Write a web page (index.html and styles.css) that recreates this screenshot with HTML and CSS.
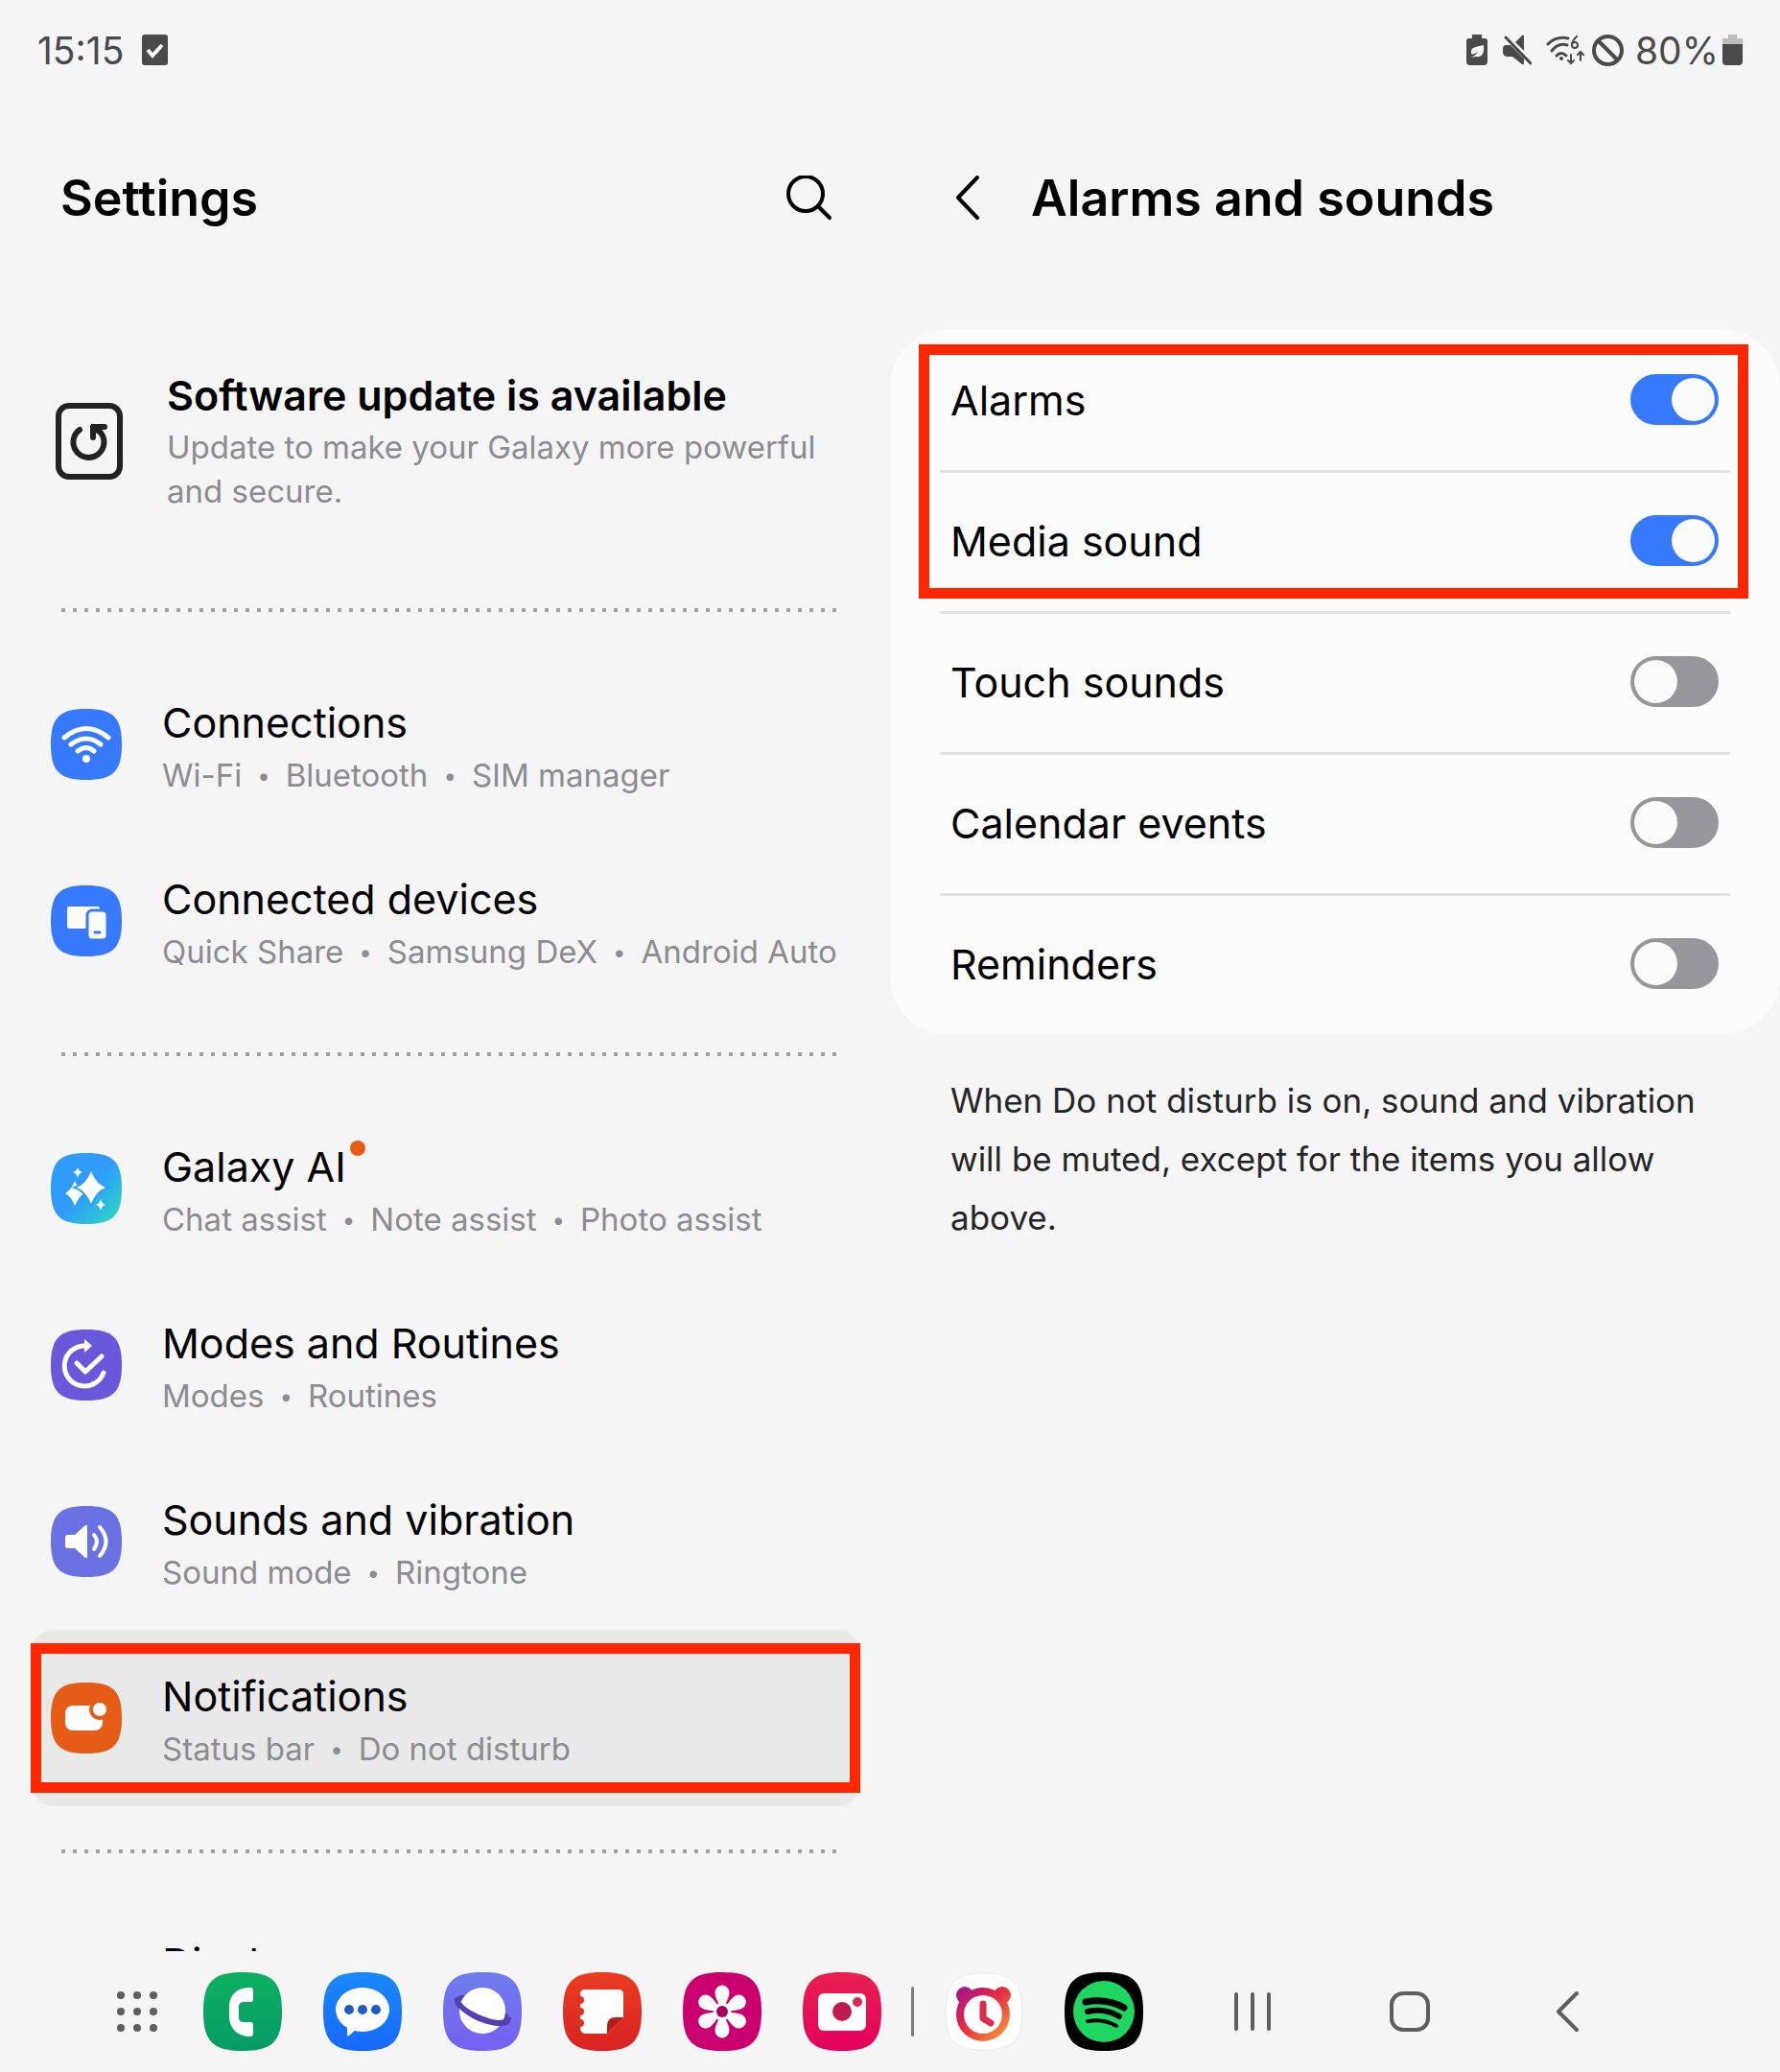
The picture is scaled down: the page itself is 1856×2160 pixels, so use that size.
FILE: index.html
```html
<!DOCTYPE html>
<html lang="en">
<head>
    <meta charset="UTF-8" />
    <meta name="viewport" content="width=device-width, initial-scale=1.0"/>
    <title>Settings</title>
    <link rel="stylesheet" href="styles.css">
</head>
<body>
<header class="status-bar">
    <span class="clock">15:15</span>
    <svg class="task-icon" width="27" height="32" viewBox="0 0 27 32"><rect width="27" height="32" rx="3" fill="#4a4a4a"/><path d="M6 16l5 6 10-11" fill="none" stroke="#fff" stroke-width="4"/></svg>
    <div class="status-icons">
        <svg width="22" height="32" viewBox="0 0 22 32"><path d="M6 0h10v4h3q3 0 3 3v21q0 4-4 4H4q-4 0-4-4V7q0-3 3-3h3z" fill="#4a4a4a"/><path d="M5 20c-1-7 4-7 13-9 1 9-2 13-8 12l-6 1c4-1 6-3 8-6-3 2-5 3-7 2z" fill="#f5f5f5"/></svg>
        <svg class="mute" width="30" height="32" viewBox="0 0 30 32"><path d="M13 8l7-7q2-1 2 1v15zM3 11h5l14 14v5q0 2-2 1l-10-8H5q-5 0-5-5v-3q0-4 3-4z" fill="#4a4a4a"/><path d="M3 3l26 27" stroke="#4a4a4a" stroke-width="3" stroke-linecap="round"/></svg>
        <svg class="wifi" width="40" height="32" viewBox="0 0 40 32"><g fill="none" stroke="#4a4a4a" stroke-width="3" stroke-linecap="round"><path d="M2 10Q11 1 23 4M6 17Q13 8 22 11M11 22q5-5 10 0"/><path d="M26 21v9m-3-3l3 3 3-3M36 27v-9m-3 3l3-3 3 3M32 2c-3 3-5 6-5 9" stroke-width="2"/><circle cx="30" cy="11" r="3" stroke-width="2"/></g><circle cx="16" cy="25" r="2" fill="#4a4a4a"/></svg>
        <svg width="33" height="33" viewBox="0 0 33 33"><g fill="none" stroke="#4a4a4a" stroke-width="4"><circle cx="16.500" cy="16.500" r="14.500"/><path d="M6 6l21 21"/></g></svg>
        <span class="battery-text">80%</span>
        <svg width="21" height="32" viewBox="0 0 21 32"><path d="M6 0h9v4h6v7H0V4h6z" fill="#bdbdbd"/><path d="M0 10h21v18q0 4-4 4H4q-4 0-4-4z" fill="#4a4a4a"/></svg>
    </div>
</header>

<main class="panes">
    <section class="pane settings-pane">
        <div class="pane-header">
            <h1>Settings</h1>
            <button class="icon-button" aria-label="Search">
                <svg width="48" height="48" viewBox="0 0 48 48"><g fill="none" stroke="#000" stroke-width="4" stroke-linecap="round"><circle cx="20" cy="19" r="18"/><path d="M33 32l12 12"/></g></svg>
            </button>
        </div>

        <a class="update" href="#update">
            <svg width="70" height="80" viewBox="0 0 70 80"><rect x="3" y="3" width="64" height="74" rx="11" fill="none" stroke="#222" stroke-width="6"/><g fill="none" stroke="#222" stroke-width="6" stroke-linecap="round" stroke-linejoin="round"><path d="M25 28A16 16 0 1 0 47 31L39 25"/><path d="M51 25H39v11"/></g></svg>
            <div>
                <h2>Software update is available</h2>
                <p class="sub">Update to make your Galaxy more powerful and secure.</p>
            </div>
        </a>

        <hr class="dots">

        <a class="item" href="#connections">
            <svg width="74" height="74" viewBox="0 0 74 74"><path d="M37 0C65 0 74 9 74 37S65 74 37 74 0 65 0 37 9 0 37 0Z" fill="#3679fd"/><g fill="none" stroke="#fff" stroke-width="5" stroke-linecap="round"><path d="M14 30Q37 11 60 30M21 37Q37 25 52 37M28 44Q37 37 45 44"/></g><circle cx="37" cy="52" r="4" fill="#fff"/></svg>
            <div>
                <div class="title">Connections</div>
                <div class="sub">Wi-Fi<i>•</i>Bluetooth<i>•</i>SIM manager</div>
            </div>
        </a>
        <a class="item" href="#devices">
            <svg width="74" height="74" viewBox="0 0 74 74"><path d="M37 0C65 0 74 9 74 37S65 74 37 74 0 65 0 37 9 0 37 0Z" fill="#3679fd"/><rect x="17" y="22" width="34" height="23" rx="2" fill="#fff"/><rect x="38" y="26" width="21" height="31" rx="5" fill="#fff" stroke="#3679fd" stroke-width="3"/><path d="M46 49h5" stroke="#3679fd" stroke-width="3" stroke-linecap="round"/></svg>
            <div>
                <div class="title">Connected devices</div>
                <div class="sub">Quick Share<i>•</i>Samsung DeX<i>•</i>Android Auto</div>
            </div>
        </a>

        <hr class="dots">

        <a class="item" href="#ai">
            <svg width="74" height="74" viewBox="0 0 74 74">
                <defs><linearGradient id="ai" x1="0" y1="0" x2="1" y2="1"><stop offset=".5" stop-color="#2f9bfb"/><stop offset="1" stop-color="#2be0c0"/></linearGradient></defs>
                <path d="M37 0C65 0 74 9 74 37S65 74 37 74 0 65 0 37 9 0 37 0Z" fill="url(#ai)"/>
                <g fill="#fff"><path d="M25 29Q29 39 35 42 29 45 25 55 21 45 15 42 21 39 25 29Z"/><path d="M42 19Q47 32 57 36 47 40 42 53 37 40 27 36 37 32 42 19Z" stroke="#2f9bfb" stroke-width="4" paint-order="stroke"/><path d="M28 15Q29 19 33 20 29 21 28 26 27 21 23 20 27 19 28 15ZM52 48Q53 53 57 54 53 55 52 60 51 55 47 54 51 53 52 48Z"/></g>
            </svg>
            <div>
                <div class="title">Galaxy AI<b class="badge"></b></div>
                <div class="sub">Chat assist<i>•</i>Note assist<i>•</i>Photo assist</div>
            </div>
        </a>
        <a class="item" href="#modes">
            <svg width="74" height="74" viewBox="0 0 74 74"><path d="M37 0C65 0 74 9 74 37S65 74 37 74 0 65 0 37 9 0 37 0Z" fill="#6957dc"/><g fill="none" stroke="#fff" stroke-width="5" stroke-linecap="round" stroke-linejoin="round"><path d="M37 17A21 21 0 1 0 55 45"/><path d="M27 35l9 9 17-16"/></g><path d="M35 10l8 7-8 7z" fill="#fff"/></svg>
            <div>
                <div class="title">Modes and Routines</div>
                <div class="sub">Modes<i>•</i>Routines</div>
            </div>
        </a>
        <a class="item" href="#sounds">
            <svg width="74" height="74" viewBox="0 0 74 74"><path d="M37 0C65 0 74 9 74 37S65 74 37 74 0 65 0 37 9 0 37 0Z" fill="#6a72e3"/><path d="M18 30h7l11-10q2-1 2 1v32q0 2-2 1L25 44h-7q-3 0-3-3v-8q0-3 3-3z" fill="#fff"/><g fill="none" stroke="#fff" stroke-width="4" stroke-linecap="round"><path d="M45 30Q51 37 45 45M51 22Q64 37 51 52"/></g></svg>
            <div>
                <div class="title">Sounds and vibration</div>
                <div class="sub">Sound mode<i>•</i>Ringtone</div>
            </div>
        </a>
        <a class="item selected" href="#notifications">
            <svg width="74" height="74" viewBox="0 0 74 74"><path d="M37 0C65 0 74 9 74 37S65 74 37 74 0 65 0 37 9 0 37 0Z" fill="#e65c17"/><rect x="15" y="24" width="39" height="26" rx="8" fill="#fff"/><circle cx="51" cy="28" r="9" fill="#fff" stroke="#e65c17" stroke-width="4"/></svg>
            <div>
                <div class="title">Notifications</div>
                <div class="sub">Status bar<i>•</i>Do not disturb</div>
            </div>
            <span class="marker"></span>
        </a>

        <hr class="dots">

        <a class="item no-icon" href="#display">
            <div class="title">Display</div>
        </a>
    </section>

    <section class="pane detail-pane">
        <div class="pane-header">
            <button class="icon-button" aria-label="Back">
                <svg width="28" height="50" viewBox="0 0 28 50"><path d="M24 3L4 24l20 21" fill="none" stroke="#000" stroke-width="4" stroke-linecap="round" stroke-linejoin="round"/></svg>
            </button>
            <h1>Alarms and sounds</h1>
        </div>
        <div class="card">
            <label class="row">Alarms<input type="checkbox" class="switch" checked></label>
            <label class="row">Media sound<input type="checkbox" class="switch" checked></label>
            <label class="row">Touch sounds<input type="checkbox" class="switch"></label>
            <label class="row">Calendar events<input type="checkbox" class="switch"></label>
            <label class="row">Reminders<input type="checkbox" class="switch"></label>
            <span class="marker"></span>
        </div>
        <p class="note">When Do not disturb is on, sound and vibration will be muted, except for the items you allow above.</p>
    </section>
</main>

<nav class="dock">
    <button class="apps-button" aria-label="Apps">
        <svg width="44" height="44" viewBox="0 0 44 44"><g fill="#5e5e5e"><circle cx="5" cy="5" r="4"/><circle cx="22" cy="5" r="4"/><circle cx="39" cy="5" r="4"/><circle cx="5" cy="22" r="4"/><circle cx="22" cy="22" r="4"/><circle cx="39" cy="22" r="4"/><circle cx="5" cy="39" r="4"/><circle cx="22" cy="39" r="4"/><circle cx="39" cy="39" r="4"/></g></svg>
    </button>
    <div class="apps">
        <button aria-label="Phone">
            <svg width="82" height="82" viewBox="0 0 82 82"><defs><linearGradient id="ph" x2="0" y2="1"><stop stop-color="#0cb060"/><stop offset="1" stop-color="#059c66"/></linearGradient></defs><path d="M41 0C72 0 82 10 82 41S72 82 41 82 0 72 0 41 10 0 41 0Z" fill="url(#ph)"/><path d="M49 16C33 16 27 26 27 36V46C27 58 35 67 49 67Q52 67 52 64V55Q52 52 49 52H42Q37 52 37 47V36Q37 31 42 31H49Q52 31 52 28V19Q52 16 49 16Z" fill="#fff"/></svg>
        </button>
        <button aria-label="Messages">
            <svg width="82" height="82" viewBox="0 0 82 82"><defs><linearGradient id="ms" x2="0" y2="1"><stop stop-color="#1a88fa"/><stop offset="1" stop-color="#1669fb"/></linearGradient></defs><path d="M41 0C72 0 82 10 82 41S72 82 41 82 0 72 0 41 10 0 41 0Z" fill="url(#ms)"/><ellipse cx="41" cy="39" rx="28" ry="23" fill="#fff"/><path d="M25 54v11q0 3 2 1l8-7z" fill="#fff"/><g fill="#1f5bc4"><circle cx="27" cy="39" r="5"/><circle cx="41" cy="39" r="5"/><circle cx="55" cy="39" r="5"/></g></svg>
        </button>
        <button aria-label="Internet">
            <svg width="82" height="82" viewBox="0 0 82 82"><defs><linearGradient id="in" x2="0" y2="1"><stop stop-color="#6f7cec"/><stop offset="1" stop-color="#7560f2"/></linearGradient></defs><path d="M41 0C72 0 82 10 82 41S72 82 41 82 0 72 0 41 10 0 41 0Z" fill="url(#in)"/><g transform="rotate(23 41 40)"><ellipse cx="41" cy="40" rx="29" ry="9" fill="#5440b0" stroke="#5440b0" stroke-width="4"/></g><circle cx="41" cy="40" r="24" fill="#fff"/><path d="M12 27C10 34 24 46 40 52S71 58 71 47L65 48C60 52 50 49 42 46 32 42 22 37 18 30Z" fill="#5440b0"/></svg>
        </button>
        <button aria-label="Notes">
            <svg width="82" height="82" viewBox="0 0 82 82"><defs><linearGradient id="nt" x2="0" y2="1"><stop stop-color="#ea3d20"/><stop offset="1" stop-color="#d62222"/></linearGradient></defs><path d="M41 0C72 0 82 10 82 41S72 82 41 82 0 72 0 41 10 0 41 0Z" fill="url(#nt)"/><path d="M23 18H58Q63 18 63 23V47L46 64H23Q18 63 18 58V23Q18 18 23 18Z" fill="#fff"/><path d="M46 64V56Q46 47 55 47H63Z" fill="#b31d16"/><path d="M46 64L63 47V66H46Z" fill="#da2922"/><g fill="#e0301f"><circle cx="18" cy="29" r="4"/><circle cx="18" cy="41" r="4"/><circle cx="18" cy="53" r="4"/></g></svg>
        </button>
        <button aria-label="Gallery">
            <svg width="82" height="82" viewBox="0 0 82 82"><defs><path id="petal" d="M41 40C38 32 34 27 34 21A7 7 0 0 1 48 21C48 27 44 32 41 40Z"/></defs><path d="M41 0C72 0 82 10 82 41S72 82 41 82 0 72 0 41 10 0 41 0Z" fill="#cb0070"/><g fill="#fff" stroke="#fff" stroke-width="1"><use href="#petal"/><use href="#petal" transform="rotate(60 41 41)"/><use href="#petal" transform="rotate(120 41 41)"/><use href="#petal" transform="rotate(180 41 41)"/><use href="#petal" transform="rotate(240 41 41)"/><use href="#petal" transform="rotate(300 41 41)"/><circle cx="41" cy="41" r="9"/></g><circle cx="41" cy="41" r="6" fill="#a3005c"/></svg>
        </button>
        <button aria-label="Camera">
            <svg width="82" height="82" viewBox="0 0 82 82"><defs><linearGradient id="cm" x2="0" y2="1"><stop stop-color="#e8214f"/><stop offset="1" stop-color="#e3005d"/></linearGradient></defs><path d="M41 0C72 0 82 10 82 41S72 82 41 82 0 72 0 41 10 0 41 0Z" fill="url(#cm)"/><rect x="16" y="22" width="50" height="39" rx="6" fill="#fff"/><circle cx="41" cy="41" r="10" fill="#c01a4e"/><circle cx="57" cy="31" r="5" fill="#d62a58"/></svg>
        </button>
    </div>
    <span class="dock-divider"></span>
    <div class="apps">
        <button aria-label="Alarm clock">
            <svg width="82" height="82" viewBox="0 0 82 82"><defs><linearGradient id="al" gradientUnits="userSpaceOnUse" x1="15" y1="18" x2="62" y2="66"><stop stop-color="#a01a8e"/><stop offset=".35" stop-color="#d81f51"/><stop offset=".6" stop-color="#ea3e3e"/><stop offset="1" stop-color="#f5923c"/></linearGradient></defs><path d="M41 1C71 1 81 11 81 41S71 81 41 81 1 71 1 41 11 1 41 1Z" fill="#fff" stroke="#e8e8e8"/><g fill="url(#al)"><circle cx="21" cy="24" r="9"/><circle cx="60" cy="24" r="9"/><circle cx="40" cy="44" r="28"/></g><circle cx="40" cy="44" r="20" fill="#fff"/><path d="M40 33v15l8 5" fill="none" stroke="#dd2a50" stroke-width="7" stroke-linecap="round" stroke-linejoin="round"/></svg>
        </button>
        <button aria-label="Spotify">
            <svg width="82" height="82" viewBox="0 0 82 82"><path d="M41 0C72 0 82 10 82 41S72 82 41 82 0 72 0 41 10 0 41 0Z"/><circle cx="41" cy="41" r="32" fill="#1ed760"/><g fill="none" stroke="#000" stroke-linecap="round"><path d="M22 31Q44 27 62 37" stroke-width="7"/><path d="M24 41Q42 37 57 46" stroke-width="6"/><path d="M24 51Q41 48 54 56" stroke-width="4"/></g></svg>
        </button>
    </div>
    <div class="nav-buttons">
        <button aria-label="Recents"><svg width="40" height="42" viewBox="0 0 40 42"><path d="M3 3v36M20 3v36M37 3v36" stroke="#5e5e5e" stroke-width="4" stroke-linecap="round"/></svg></button>
        <button aria-label="Home"><svg width="42" height="42" viewBox="0 0 42 42"><rect x="2" y="2" width="38" height="38" rx="12" fill="none" stroke="#5e5e5e" stroke-width="4"/></svg></button>
        <button aria-label="Go back"><svg width="26" height="44" viewBox="0 0 26 44"><path d="M23 3L4 22l19 19" fill="none" stroke="#5e5e5e" stroke-width="4" stroke-linecap="round" stroke-linejoin="round"/></svg></button>
    </div>
</nav>
</body>
</html>
```

FILE: styles.css
```css
* { box-sizing: border-box; }
html, body { height: 100%; margin: 0; padding: 0; }
body {
    display: flex; flex-direction: column; overflow: hidden;
    font-family: Inter, Roboto, sans-serif;
    background: #f5f5f5; color: #000;
}
svg { display: block; flex: none; }
button { background: none; border: none; padding: 0; cursor: pointer; }
a { color: inherit; text-decoration: none; }
h1, h2, p { margin: 0; }
h1 { font-size: 52px; line-height: 64px; font-weight: 600; }

/* Status bar */
.status-bar { display: flex; align-items: center; height: 104px; padding: 0 39px; color: #4a4a4a; font-size: 39px; flex: none; }
.task-icon { margin-left: 19px; }
.status-icons { display: flex; align-items: center; margin-left: auto; }
.mute { margin: 0 15px 0 16px; }
.wifi { margin-right: 8px; }
.battery-text { margin: 0 4px 0 12px; }

/* Panes */
.panes { flex: 1; min-height: 0; display: grid; grid-template-columns: 1fr 1fr; }
.pane { overflow: hidden; min-width: 0; }
.pane-header { display: flex; align-items: center; height: 206px; margin-bottom: 33px; }
.settings-pane { padding: 0 31px 0 32px; }
.settings-pane .pane-header { padding: 0 29px 0 31px; justify-content: space-between; }
.detail-pane .pane-header { padding-left: 67px; gap: 52px; }

.update { display: flex; align-items: center; gap: 46px; height: 246px; padding: 0 26px; padding-bottom: 13px; }
h2 { font-size: 43px; line-height: 56px; padding-bottom: 3px; font-weight: 600; }
.sub { font-size: 33px; line-height: 46px; color: #8c8c91; }
.sub i { font-style: normal; font-size: 24px; line-height: 1; vertical-align: 3px; padding: 0 16px; }

.dots { height: 4px; margin: 45px 24px 46px 32px; border: none; background: repeating-linear-gradient(90deg, #a0a0a0 0 4px, transparent 4px 12px); }

.item { position: relative; display: flex; align-items: center; gap: 42px; height: 184px; padding: 0 21px; border-radius: 24px; }
.item .title { font-size: 43px; line-height: 56px; padding: 4px 0; }
.item.selected { background: #e9e9e9; }
.item.no-icon { padding: 0 0 48px 137px; }
.badge { position: absolute; width: 16px; height: 16px; margin: 1px 0 0 4px; border-radius: 50%; background: #e65c17; }

.marker { position: absolute; border: 11px solid #ff2600; pointer-events: none; }
.item .marker { inset: 14px 0; }
.card .marker { top: 16px; left: 30px; right: 33px; height: 265px; }

/* Detail card */
.card { position: relative; padding: 0 52px; border-radius: 60px; background: #fcfcfc; }
.row { display: flex; align-items: center; justify-content: space-between; height: 147px; padding: 0 12px 0 11px; font-size: 43px; }
.row + .row { border-top: 3px solid #e2e2e2; padding-bottom: 3px; }
.switch { appearance: none; width: 92px; height: 53px; margin: 0; padding: 4px; border-radius: 27px; background: #97979b; display: flex; }
.switch::before { content: ""; width: 45px; height: 45px; border-radius: 50%; background: #fcfcfc; }
.switch:checked { background: #3679fd; justify-content: flex-end; }
.note { padding: 39px 63px; font-size: 35px; line-height: 61px; color: #252525; }

/* Dock */
.dock { display: flex; align-items: center; height: 126px; padding-left: 121px; flex: none; }
.apps { display: flex; gap: 43px; }
.apps-button { margin-right: 47px; }
.dock-divider { width: 3px; height: 52px; margin: 0 32px 0 31px; border-radius: 2px; background: #7d7d7d; }
.nav-buttons { display: flex; gap: 82px; margin-left: 73px; }
.nav-buttons button { display: flex; align-items: center; justify-content: center; width: 82px; height: 82px; }
```
